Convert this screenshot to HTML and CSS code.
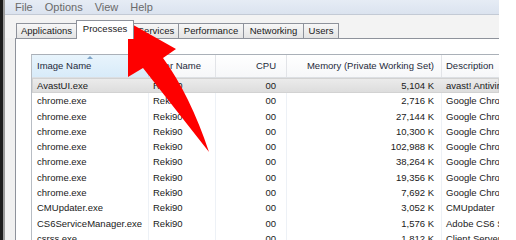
FILE: index.html
```html
<!DOCTYPE html>
<html lang="en">

<head>
  <meta charset="UTF-8"/>
  <title>Windows Task Manager</title>
  <link rel="stylesheet" href="styles.css">
</head>

<body>
<div class="frame">
  <div class="window">
    <div class="menubar">
      <span>File</span>
      <span>Options</span>
      <span>View</span>
      <span>Help</span>
    </div>
    <div class="tabstrip">
      <div class="tab w-apps">Applications</div>
      <div class="tab tab-active w-proc">Processes</div>
      <div class="tab w-serv">Services</div>
      <div class="tab w-perf">Performance</div>
      <div class="tab w-net">Networking</div>
      <div class="tab w-users">Users</div>
    </div>
    <div class="panel">
      <div class="list">
        <div class="row head">
          <div class="cell sorted">Image Name<span class="sort-arrow"></span></div>
          <div class="cell">User Name</div>
          <div class="cell num cpu">CPU</div>
          <div class="cell num mem">Memory (Private Working Set)</div>
          <div class="cell">Description</div>
        </div>
        <div class="row selected">
          <div class="cell">AvastUI.exe</div><div class="cell">Reki90</div><div class="cell num cpu">00</div><div class="cell num mem">5,104 K</div><div class="cell">avast! Antivirus</div>
        </div>
        <div class="row">
          <div class="cell">chrome.exe</div><div class="cell">Reki90</div><div class="cell num cpu">00</div><div class="cell num mem">2,716 K</div><div class="cell">Google Chrome</div>
        </div>
        <div class="row">
          <div class="cell">chrome.exe</div><div class="cell">Reki90</div><div class="cell num cpu">00</div><div class="cell num mem">27,144 K</div><div class="cell">Google Chrome</div>
        </div>
        <div class="row">
          <div class="cell">chrome.exe</div><div class="cell">Reki90</div><div class="cell num cpu">00</div><div class="cell num mem">10,300 K</div><div class="cell">Google Chrome</div>
        </div>
        <div class="row">
          <div class="cell">chrome.exe</div><div class="cell">Reki90</div><div class="cell num cpu">00</div><div class="cell num mem">102,988 K</div><div class="cell">Google Chrome</div>
        </div>
        <div class="row">
          <div class="cell">chrome.exe</div><div class="cell">Reki90</div><div class="cell num cpu">00</div><div class="cell num mem">38,264 K</div><div class="cell">Google Chrome</div>
        </div>
        <div class="row">
          <div class="cell">chrome.exe</div><div class="cell">Reki90</div><div class="cell num cpu">00</div><div class="cell num mem">19,356 K</div><div class="cell">Google Chrome</div>
        </div>
        <div class="row">
          <div class="cell">chrome.exe</div><div class="cell">Reki90</div><div class="cell num cpu">00</div><div class="cell num mem">7,692 K</div><div class="cell">Google Chrome</div>
        </div>
        <div class="row">
          <div class="cell">CMUpdater.exe</div><div class="cell">Reki90</div><div class="cell num cpu">00</div><div class="cell num mem">3,052 K</div><div class="cell">CMUpdater</div>
        </div>
        <div class="row">
          <div class="cell">CS6ServiceManager.exe</div><div class="cell">Reki90</div><div class="cell num cpu">00</div><div class="cell num mem">1,576 K</div><div class="cell">Adobe CS6 Service Manager</div>
        </div>
        <div class="row">
          <div class="cell">csrss.exe</div><div class="cell"></div><div class="cell num cpu">00</div><div class="cell num mem">1,812 K</div><div class="cell">Client Server Runtime</div>
        </div>
      </div>
    </div>
  </div>
</div>

<!-- red pointer drawn over the screenshot -->
<svg class="pointer" width="516" height="240" viewBox="0 0 516 240">
  <path d="M128,22 L128,77 L143,68 L209,152 Q190,95 163,58 L176,49 Z" fill="#fe0000"/>
</svg>
</body>

</html>
```

FILE: styles.css
```css
body {
  margin: 0;
  width: 516px;
  height: 240px;
  overflow: hidden;
  background: #fff;
  position: relative;
  font-family: 'Liberation Sans', Arial, sans-serif;
  font-size: 9.5px;
  color: #1a1a1a;
}

.frame {
  width: 496px;
  height: 240px;
  border-left: 3px solid #1c1c1c;
}

.window {
  height: 240px;
  border-left: 2px solid #9a9a9a;
  background: #f0f0f0;
  overflow: hidden;
}

.menubar {
  height: 14px;
  line-height: 14px;
  display: flex;
  gap: 12px;
  padding-left: 10px;
  font-size: 11px;
  color: #6a6a6a;
  background: linear-gradient(#e6ecf5, #dbe3ef);
  border-bottom: 1px solid #c3cad5;
}

.tabstrip {
  height: 23px;
  display: flex;
  align-items: flex-end;
  padding-left: 11px;
  background: #f3f3f3;
}

.tab {
  height: 14px;
  line-height: 14px;
  text-align: center;
  box-sizing: border-box;
  height: 15px;
  border: 1px solid #8e929b;
  border-bottom: none;
  margin-right: -1px;
  background: linear-gradient(#f7f7f7, #e4e4e4);
  white-space: nowrap;
}

.tab-active {
  height: 19px;
  line-height: 15px;
  margin-bottom: -1px;
  margin-right: -1px;
  background: #fff;
  position: relative;
  z-index: 1;
}

.w-apps { width: 61px; }
.w-proc { width: 58px; }
.w-serv { width: 46px; }
.w-perf { width: 66px; }
.w-net { width: 61px; }
.w-users { width: 36px; }

.panel {
  margin-left: 10px;
  height: 200px;
  border-top: 1px solid #8e929b;
  border-left: 1px solid #8e929b;
  background: #fff;
  padding: 15px 0 0 15px;
}

.list {
  border-top: 1px solid #aab0b8;
  border-left: 1px solid #b8bdc4;
}

.row {
  display: grid;
  grid-template-columns: 117px 67px 71px 155px 1fr;
  height: 15.3px;
  line-height: 15.3px;
}

.cell {
  box-sizing: border-box;
  border-right: 1px solid #edf1f6;
  white-space: nowrap;
  overflow: hidden;
  padding-left: 5px;
}

.row .cell:nth-child(2) { padding-left: 4px; }
.row .cell:nth-child(5) { padding-left: 4px; border-right: none; }

.num {
  text-align: right;
  padding-left: 0;
}

.cpu { padding-right: 10px; }
.mem { padding-right: 7px; }

.head {
  height: 22px;
  line-height: 22px;
  border-bottom: 1px solid #dcdfe3;
  background: linear-gradient(#ffffff, #f6f7f9);
  color: #1e2a3a;
}

.head .cell {
  border-right: 1px solid #e2e4e8;
}

.head .sorted {
  position: relative;
  background: linear-gradient(#e8f4fc, #d8ebf9);
  border-right: 1px solid #b7d9f2;
}

.sort-arrow {
  position: absolute;
  top: 1px;
  left: 55px;
  width: 0;
  height: 0;
  border-left: 3px solid transparent;
  border-right: 3px solid transparent;
  border-bottom: 3px solid #7fa4c7;
}

.selected {
  background: linear-gradient(#ececec, #dcdcdc);
  box-shadow: inset 0 0 0 1px #d2d2d2;
}

.selected .cell {
  border-right-color: transparent;
}

.pointer {
  position: absolute;
  top: 0;
  left: 0;
  pointer-events: none;
}
```
